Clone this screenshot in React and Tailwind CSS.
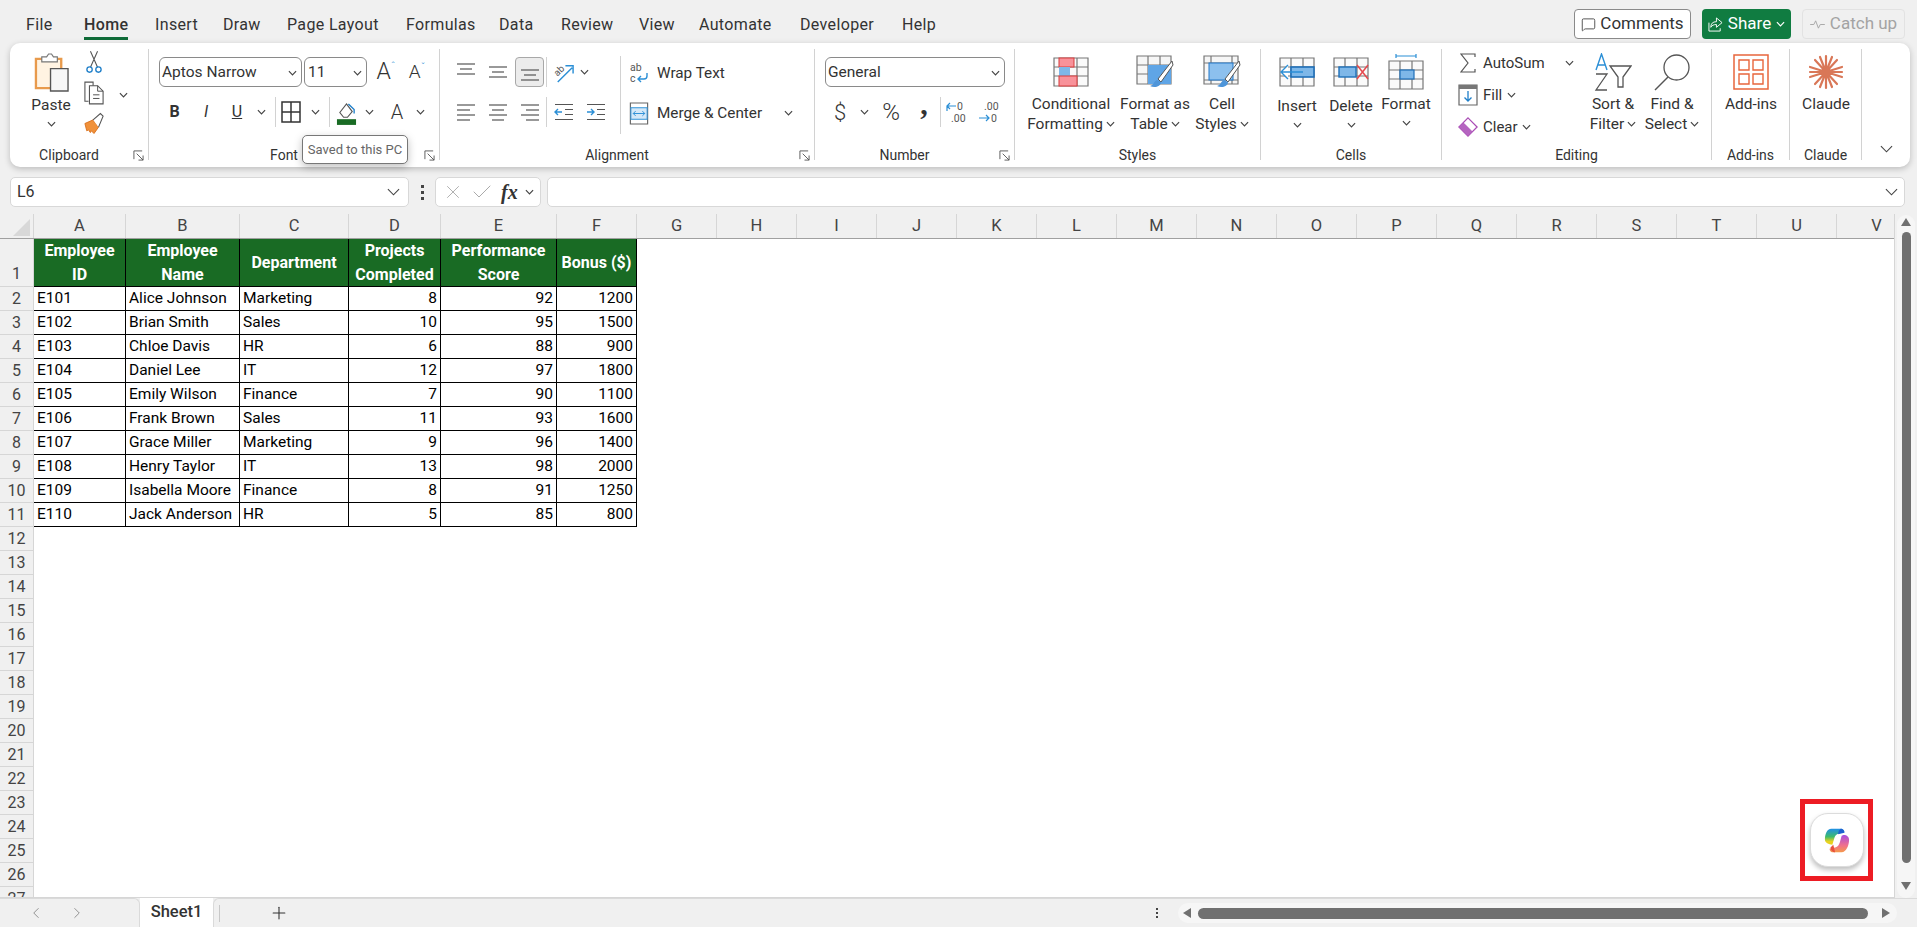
import { X, Check, MessageSquare, Plus, ChevronLeft, ChevronRight } from "lucide-react"

const tabs = [
  ["File", "w-[58px]"],
  ["Home", "w-[71px]"],
  ["Insert", "w-[68px]"],
  ["Draw", "w-[64px]"],
  ["Page Layout", "w-[119px]"],
  ["Formulas", "w-[93px]"],
  ["Data", "w-[62px]"],
  ["Review", "w-[78px]"],
  ["View", "w-[60px]"],
  ["Automate", "w-[101px]"],
  ["Developer", "w-[102px]"],
  ["Help", "w-[50px]"],
]

const columns = [
  ["A", "w-[92px]"],
  ["B", "w-[114px]"],
  ["C", "w-[109px]"],
  ["D", "w-[92px]"],
  ["E", "w-[116px]"],
  ["F", "w-[80px]"],
  ...["G", "H", "I", "J", "K", "L", "M", "N", "O", "P", "Q", "R", "S", "T", "U", "V"].map((c) => [c, "w-[80px]"]),
]

const headers = [["Employee", "ID"], ["Employee", "Name"], ["Department"], ["Projects", "Completed"], ["Performance", "Score"], ["Bonus ($)"]]

const employees = [
  ["E101", "Alice Johnson", "Marketing", 8, 92, 1200],
  ["E102", "Brian Smith", "Sales", 10, 95, 1500],
  ["E103", "Chloe Davis", "HR", 6, 88, 900],
  ["E104", "Daniel Lee", "IT", 12, 97, 1800],
  ["E105", "Emily Wilson", "Finance", 7, 90, 1100],
  ["E106", "Frank Brown", "Sales", 11, 93, 1600],
  ["E107", "Grace Miller", "Marketing", 9, 96, 1400],
  ["E108", "Henry Taylor", "IT", 13, 98, 2000],
  ["E109", "Isabella Moore", "Finance", 8, 91, 1250],
  ["E110", "Jack Anderson", "HR", 5, 85, 800],
]

const emptyRows = Array.from({ length: 16 }, (_, i) => i + 12)

function Chev({ dark }) {
  return (
    <svg viewBox="0 0 10 6" className="w-[9px] h-[6px] shrink-0">
      <path d="M1 1l4 4 4-4" fill="none" stroke={dark ? "#fff" : "#444"} strokeWidth="1.3" />
    </svg>
  )
}

function Slot({ className = "", children }) {
  return <div className={`flex items-center justify-center shrink-0 h-[30px] ${className}`}>{children}</div>
}

function Sep() {
  return <div className="w-px h-[30px] bg-[#d2d2d2] shrink-0" />
}

function Launcher() {
  return (
    <div className="w-[20px] flex justify-center shrink-0">
      <svg viewBox="0 0 12 12" className="w-[11px] h-[11px]">
        <path d="M1 10V1h9M4 4l7 7M11 6v5H6" fill="none" stroke="#555" strokeWidth="1" />
      </svg>
    </div>
  )
}

function Group({ label, launcher, width, children }) {
  return (
    <div className={`flex flex-col h-[111px] border-r border-[#d2d2d2] shrink-0 ${width}`}>
      <div className="flex flex-1 min-h-0">{children}</div>
      <div className="flex items-center h-[16px] -mb-[3px]">
        <div className="flex-1 text-center text-[14px] leading-[16px] text-[#333]">{label}</div>
        {launcher && <Launcher />}
      </div>
    </div>
  )
}

function BigButton({ icon, lines, chev, width, low, below }) {
  return (
    <div className={`flex flex-col items-center shrink-0 ${width}`}>
      <div className="h-[45px] flex items-center justify-center">{icon}</div>
      <div className={`text-[15.5px] leading-[20px] text-center text-[#333] whitespace-nowrap ${low ? "mt-[2px]" : ""}`}>
        {lines.map((l, i) => (
          <div key={l} className="flex items-center justify-center gap-[3px]">
            {l}
            {chev && i === lines.length - 1 && <Chev />}
          </div>
        ))}
      </div>
      {below && <div className="mt-[6px]"><Chev /></div>}
    </div>
  )
}

function Lines({ bars, y = 0, color = "#555" }) {
  return (
    <svg viewBox="0 0 20 20" className="w-[20px] h-[20px]">
      {bars.map(([x1, x2, yy]) => (
        <path key={yy} d={`M${x1} ${yy + y}H${x2}`} stroke={color} strokeWidth="1.2" />
      ))}
    </svg>
  )
}

function Indent({ flip }) {
  return (
    <svg viewBox="0 0 20 20" className="w-[20px] h-[20px]">
      <path d="M1 2.5h18M1 17.5h18M11 7.5h8M11 12.5h8" stroke="#555" strokeWidth="1.2" />
      <path d={flip ? "M1 10h7M5 7l3 3-3 3" : "M8 10H1M4 7l-3 3 3 3"} fill="none" stroke="#2b8fd6" strokeWidth="1.4" />
    </svg>
  )
}

function SheetGrid({ children, className = "" }) {
  return (
    <svg viewBox="0 0 36 30" className={`w-[36px] h-[30px] ${className}`}>
      <path d="M1 1h34v28H1zM1 10h34M1 19h34M12 1v28M24 1v28" fill="#fafafa" stroke="#777" strokeWidth="1.2" />
      {children}
    </svg>
  )
}

const CutIcon = (
  <svg viewBox="0 0 18 26" className="w-[16px] h-[24px]">
    <path d="M5 1l8 18M13 1L5 19" stroke="#555" strokeWidth="1.2" />
    <circle cx="4" cy="21.5" r="3" fill="none" stroke="#1f7fc9" strokeWidth="1.5" />
    <circle cx="14" cy="21.5" r="3" fill="none" stroke="#1f7fc9" strokeWidth="1.5" />
  </svg>
)

const CopyIcon = (
  <svg viewBox="0 0 22 26" className="w-[20px] h-[24px]">
    <path d="M5 22H1V1h9v4" fill="none" stroke="#555" strokeWidth="1.2" />
    <path d="M6 5h9l6 6v14H6z" fill="#fff" stroke="#555" strokeWidth="1.2" />
    <path d="M15 5v6h6M10 15h7M10 19h7" fill="none" stroke="#555" strokeWidth="1.1" />
  </svg>
)

const PainterIcon = (
  <svg viewBox="0 0 22 24" className="w-[20px] h-[23px]">
    <path d="M1 12l9-4 6 8-5 7-3-3-1 2-2-3-2 1z" fill="#f0913a" stroke="#d8701c" />
    <path d="M10 8l8-7 3 3-5 12" fill="#fff" stroke="#555" strokeWidth="1.2" />
  </svg>
)

const PasteIcon = (
  <svg viewBox="0 0 36 40" className="w-[35px] h-[39px]">
    <path d="M2 6h26v30H2z" fill="#fff3e2" stroke="#e89a4c" strokeWidth="2.4" />
    <path d="M8 4h5l2-3h3l2 3h4v5H8z" fill="#fff" stroke="#777" strokeWidth="1.2" />
    <path d="M17 16h18v23H17z" fill="#f7f7f7" stroke="#555" strokeWidth="1.4" />
  </svg>
)

const BorderIcon = (
  <svg viewBox="0 0 20 22" className="w-[20px] h-[22px]">
    <path d="M1 1h18v20H1zM10 1v20M1 11h18" fill="none" stroke="#333" strokeWidth="1.5" />
  </svg>
)

const FillIcon = (
  <svg viewBox="0 0 22 26" className="w-[21px] h-[25px]">
    <path d="M4 13l7-9 6 8-5 6H8z" fill="#fff" stroke="#555" strokeWidth="1.2" />
    <path d="M13 4l6 6v4" fill="none" stroke="#1f7fc9" strokeWidth="1.4" />
    <rect x="1" y="20" width="20" height="6" fill="#196b24" />
  </svg>
)

const OrientIcon = (
  <svg viewBox="0 0 24 24" className="w-[23px] h-[23px]">
    <text x="2" y="13" fontSize="10" fill="#555" transform="rotate(-45 8 10)" fontFamily="Roboto, sans-serif">ab</text>
    <path d="M6 22L21 7M14 5h8v8" fill="none" stroke="#2b8fd6" strokeWidth="1.5" />
  </svg>
)

const WrapIcon = (
  <svg viewBox="0 0 18 22" className="w-[18px] h-[22px]">
    <text x="0" y="9" fontSize="10.5" fill="#555" fontFamily="Roboto, sans-serif">ab</text>
    <text x="0" y="20" fontSize="10.5" fill="#555" fontFamily="Roboto, sans-serif">c</text>
    <path d="M17 11v3a3 3 0 0 1-3 3H8M11 14l-3 3 3 3" fill="none" stroke="#2b8fd6" strokeWidth="1.4" />
  </svg>
)

const MergeIcon = (
  <svg viewBox="0 0 20 24" className="w-[20px] h-[23px]">
    <path d="M1 1h18v22H1z" fill="#fff" stroke="#666" strokeWidth="1.2" />
    <rect x="1.5" y="6" width="17" height="12" fill="#d4e8f8" stroke="#2b8fd6" />
    <path d="M4 12h12M6.5 9.5L4 12l2.5 2.5M13.5 9.5L16 12l-2.5 2.5" fill="none" stroke="#2b8fd6" />
  </svg>
)

const DecIcon = ({ inc }) => (
  <svg viewBox="0 0 22 24" className="w-[22px] h-[24px]">
    <text x={inc ? "11" : "6"} y="10" fontSize="10.5" fill="#555" fontFamily="Roboto, sans-serif">{inc ? "0" : ".00"}</text>
    <text x={inc ? "5" : "13"} y="22" fontSize="10.5" fill="#555" fontFamily="Roboto, sans-serif">{inc ? ".00" : "0"}</text>
    {inc ? (
      <path d="M10 6H1M4 3L1 6l3 3M1 6v5" fill="none" stroke="#2b8fd6" strokeWidth="1.2" />
    ) : (
      <path d="M1 18h10M8 15l3 3-3 3" fill="none" stroke="#2b8fd6" strokeWidth="1.2" />
    )}
  </svg>
)

const CondIcon = (
  <SheetGrid>
    <rect x="6" y="1" width="15" height="9" fill="#f8929a" stroke="#d83b3b" />
    <rect x="6" y="10" width="11" height="9" fill="#7eb7e8" />
    <rect x="6" y="19" width="18" height="10" fill="#f8929a" stroke="#d83b3b" />
  </SheetGrid>
)

const BrushPath = (
  <>
    <path d="M36 6L22 24l3 3L37 10z" fill="#fff" stroke="#555" />
    <path d="M21 25c-3 1-3 5-7 6 4 2 11 1 11-4z" fill="#4e95d9" />
  </>
)

const TableIcon = (
  <svg viewBox="0 0 38 33" className="w-[38px] h-[33px]">
    <path d="M1 1h34v28H1zM1 10h34M1 19h34M12 1v28M24 1v28" fill="#f6f6f6" stroke="#777" strokeWidth="1.2" />
    <rect x="12" y="10" width="23" height="19" fill="#5fa5e6" />
    {BrushPath}
  </svg>
)

const StylesIcon = (
  <svg viewBox="0 0 38 33" className="w-[38px] h-[33px]">
    <path d="M1 1h34v28H1zM1 8h34M8 1v28M29 1v28M1 25h34" fill="#f6f6f6" stroke="#777" strokeWidth="1.2" />
    <rect x="6" y="8" width="24" height="17" fill="#8cc0ee" stroke="#2278c9" />
    {BrushPath}
  </svg>
)

const InsertIcon = (
  <SheetGrid>
    <rect x="12" y="10" width="23" height="10" fill="#7eb7e8" stroke="#1f6fb8" strokeWidth="1.6" />
    <path d="M24 15H3M9 8l-7 7 7 7" fill="#fff" stroke="#2b8fd6" strokeWidth="1.4" />
  </SheetGrid>
)

const DeleteIcon = (
  <SheetGrid>
    <rect x="6" y="10" width="17" height="10" fill="#7eb7e8" stroke="#1f6fb8" strokeWidth="1.4" />
    <path d="M24 8l11 14M35 8L24 22" stroke="#e5484d" strokeWidth="1.5" />
  </SheetGrid>
)

const FormatIcon = (
  <svg viewBox="0 0 36 36" className="w-[36px] h-[36px]">
    <path d="M8 2h20M8 0v4M28 0v4" stroke="#2b8fd6" strokeWidth="1.2" />
    <path d="M1 7h34v28H1zM1 16h34M1 25h34M12 7v28M24 7v28" fill="#fafafa" stroke="#777" strokeWidth="1.2" />
    <rect x="12" y="16" width="14" height="9" fill="#7eb7e8" stroke="#1f6fb8" strokeWidth="1.2" />
  </svg>
)

const SigmaIcon = (
  <svg viewBox="0 0 16 20" className="w-[16px] h-[20px]">
    <path d="M15 4V1H1l7 9-7 9h14v-3" fill="none" stroke="#555" strokeWidth="1.2" />
  </svg>
)

const FillDown = (
  <svg viewBox="0 0 20 22" className="w-[20px] h-[22px]">
    <path d="M1 1h18v20H1z" fill="#fff" stroke="#666" strokeWidth="1.2" />
    <rect x="1" y="1" width="18" height="4" fill="#777" />
    <path d="M10 7v10M6.5 13.5L10 17l3.5-3.5" fill="none" stroke="#1f7fc9" strokeWidth="1.3" />
  </svg>
)

const ClearIcon = (
  <svg viewBox="0 0 22 22" className="w-[20px] h-[20px]">
    <path d="M11 1l10 10-10 10L1 11z" fill="#fff" stroke="#a94bb5" strokeWidth="1.4" />
    <path d="M1 11l5-5 10 10-5 5z" fill="#b565c0" />
  </svg>
)

const SortIcon = (
  <svg viewBox="0 0 38 38" className="w-[38px] h-[38px]">
    <path d="M2 17L7.5 1 13 17M4 12h7" fill="none" stroke="#2b8fd6" strokeWidth="1.4" />
    <path d="M2 21h11L2 37h11" fill="none" stroke="#555" strokeWidth="1.3" />
    <path d="M16 13h21l-8 11v10h-5V24z" fill="#fff" stroke="#555" strokeWidth="1.3" />
  </svg>
)

const FindIcon = (
  <svg viewBox="0 0 38 38" className="w-[38px] h-[38px]">
    <circle cx="23.5" cy="14.5" r="12.5" fill="#fff" stroke="#555" strokeWidth="1.3" />
    <path d="M15 24L2 37" stroke="#555" strokeWidth="1.4" />
  </svg>
)

const AddinsIcon = (
  <svg viewBox="0 0 36 36" className="w-[36px] h-[36px]">
    <path d="M1 1h34v34H1z" fill="none" stroke="#e8663c" strokeWidth="1.5" />
    <path d="M6 6h10v10H6zM20 6h10v10H20zM6 20h10v10H6zM20 20h10v10H20z" fill="none" stroke="#e8663c" strokeWidth="1.4" />
  </svg>
)

const ClaudeIcon = (
  <svg viewBox="0 0 36 36" className="w-[36px] h-[36px]">
    <path
      d="M18 2v32M7 6l22 24M29 6L7 30M2 13l32 10M34 13L2 23M12 3l12 30M24 3L12 33M2 18h32"
      stroke="#d97757"
      strokeWidth="2.2"
      strokeLinecap="round"
    />
    <circle cx="18" cy="18" r="5" fill="#d97757" />
  </svg>
)

const CopilotIcon = (
  <svg viewBox="0 0 28 36" preserveAspectRatio="none" className="w-[26px] h-[25px]">
    <defs>
      <linearGradient id="cpLeft" x1="0" y1="0" x2="0" y2="1">
        <stop offset="0" stopColor="#1f8fe8" />
        <stop offset="0.5" stopColor="#3dbb6c" />
        <stop offset="0.8" stopColor="#e8d21f" />
      </linearGradient>
      <linearGradient id="cpRight" x1="0" y1="0" x2="0" y2="1">
        <stop offset="0" stopColor="#a64de0" />
        <stop offset="0.6" stopColor="#f0708c" />
        <stop offset="1" stopColor="#f59a4a" />
      </linearGradient>
    </defs>
    <path d="M8 1h10c3 0 4 3 4 5L16 8c-3 1-4 3-5 7l-2 9c-4 0-8-3-8-7C1 9 3 1 8 1z" fill="url(#cpLeft)" />
    <path d="M18 1c3 0 4 4 4 6l-7 2 1-5z" fill="#1c5fd0" />
    <path d="M21 10c4 0 6 3 6 7 0 8-3 18-8 18H9c-2 0-3-3-3-5l6-2c3-1 4-3 5-7l2-10z" fill="url(#cpRight)" />
    <path d="M10 24l2 11c-3 0-5-4-5-7z" fill="#e8503c" />
  </svg>
)

function App() {
  return (
    <div className="w-[1917px] h-[927px] overflow-hidden flex flex-col bg-[#f0f0f0] text-[#333] font-['Roboto',sans-serif]">
      {/* tabs */}
      <div className="flex h-[43px] shrink-0">
        <div className="flex flex-1 pl-[26px] pt-[13px] text-[16px] tracking-[0.35px]">
          {tabs.map(([name, w]) => (
            <div key={name} className={`h-[27px] ${w}`}>
              <span className={`inline-block h-[27px] leading-[24px] ${name === "Home" ? "font-medium border-b-[3px] border-[#0f6b38]" : ""}`}>
                {name}
              </span>
            </div>
          ))}
        </div>
        <div className="flex gap-[11px] pt-[9px] pr-[12px] text-[17px]">
          <div className="w-[117px] h-[30px] flex items-center justify-center gap-[4px] bg-white border border-[#8a8a8a] rounded-[4px]">
            <MessageSquare size={15} strokeWidth={1.3} />
            Comments
          </div>
          <div className="w-[89px] h-[30px] flex items-center justify-center gap-[5px] bg-[#107c41] text-white rounded-[4px]">
            <svg viewBox="0 0 16 16" className="w-[15px] h-[15px]">
              <path d="M9 1l6 5-6 5V8C6 8 4 9 3 11c0-4 2-6 6-6zM1 6v9h12v-3" fill="none" stroke="#fff" strokeWidth="1" />
            </svg>
            Share
            <Chev dark />
          </div>
          <div className="w-[103px] h-[30px] flex items-center justify-center gap-[5px] text-[#a3a3a3] border border-[#e2e2e2] rounded-[4px]">
            <svg viewBox="0 0 16 12" className="w-[15px] h-[11px]">
              <path d="M0 6h4l2-4 3 8 2-4h5" fill="none" stroke="#a3a3a3" strokeWidth="1" />
            </svg>
            Catch up
          </div>
        </div>
      </div>

      {/* ribbon */}
      <div className="relative ml-[10px] w-[1900px] h-[124px] shrink-0 flex pt-[6px] bg-white rounded-[10px] shadow-[0_2px_6px_rgba(0,0,0,0.22)]">
        <Group label="Clipboard" launcher width="w-[139px]">
          <div className="w-[76px] flex flex-col items-center pl-[6px]">
            <div className="mt-[4px]">{PasteIcon}</div>
            <div className="text-[15.5px] leading-[20px] mt-[3px]">Paste</div>
            <div className="mt-[6px]"><Chev /></div>
          </div>
          <div className="flex flex-col items-center w-[24px] -ml-[4px] pt-[1px] gap-[7px]">
            {CutIcon}
            {CopyIcon}
            {PainterIcon}
          </div>
          <div className="ml-[13px] mt-[43px]"><Chev /></div>
        </Group>

        <Group label="Font" launcher width="w-[291px]">
          <div className="flex flex-col pl-[10px] pt-[8px]">
            <div className="flex items-center">
              <div className="w-[143px] h-[30px] flex items-center justify-between pt-[1px] pl-[2px] pr-[4px] border border-[#8a8a8a] rounded-[6px] text-[15.5px]">
                Aptos Narrow <Chev />
              </div>
              <div className="ml-[2px] w-[63px] h-[30px] flex items-center justify-between pt-[1px] pl-[3px] pr-[4px] border border-[#8a8a8a] rounded-[6px] text-[15.5px]">
                11 <Chev />
              </div>
              <Slot className="w-[32px] text-[23px] font-light">
                A<span className="text-[#2b8fd6] text-[11px] mb-[10px] -mr-[6px]">ˆ</span>
              </Slot>
              <Slot className="w-[36px] text-[19px] font-light">
                A<span className="text-[#2b8fd6] text-[11px] mb-[8px]">ˇ</span>
              </Slot>
            </div>
            <div className="flex items-center mt-[10px]">
              <Slot className="w-[31px] font-bold text-[16px]">B</Slot>
              <Slot className="w-[32px] italic text-[16px]">I</Slot>
              <Slot className="w-[30px] underline text-[16px]">U</Slot>
              <Slot className="w-[18px]"><Chev /></Slot>
              <div className="ml-[5px]"><Sep /></div>
              <Slot className="w-[30px]">{BorderIcon}</Slot>
              <Slot className="w-[18px]"><Chev /></Slot>
              <div className="ml-[5px]"><Sep /></div>
              <Slot className="w-[33px]">{FillIcon}</Slot>
              <Slot className="w-[13px]"><Chev /></Slot>
              <Slot className="w-[42px] text-[20px] font-light">A</Slot>
              <Slot className="w-[4px]"><Chev /></Slot>
            </div>
          </div>
        </Group>

        <Group label="Alignment" launcher width="w-[375px]">
          <div className="flex pl-[10px] pt-[8px]">
            <div className="w-[170px] flex flex-col gap-[10px]">
              <div className="flex items-center">
                <Slot className="w-[32px]"><Lines bars={[[1, 19, 2], [4, 16, 7], [1, 19, 12]]} /></Slot>
                <Slot className="w-[32px]"><Lines bars={[[1, 19, 5], [4, 16, 10], [1, 19, 15]]} /></Slot>
                <Slot className="ml-[1px] w-[29px] bg-[#ececec] border border-[#a8a8a8] rounded-[4px]">
                  <Lines bars={[[1, 19, 8], [4, 16, 13], [1, 19, 18]]} />
                </Slot>
                <div className="ml-[2px]"><Sep /></div>
                <Slot className="w-[33px]">{OrientIcon}</Slot>
                <Slot className="w-[8px]"><Chev /></Slot>
              </div>
              <div className="flex items-center">
                <Slot className="w-[32px]"><Lines bars={[[1, 19, 3], [1, 14, 8], [1, 19, 13], [1, 14, 18]]} /></Slot>
                <Slot className="w-[32px]"><Lines bars={[[1, 19, 3], [4, 16, 8], [1, 19, 13], [4, 16, 18]]} /></Slot>
                <Slot className="ml-[1px] w-[29px]"><Lines bars={[[1, 19, 3], [6, 19, 8], [1, 19, 13], [6, 19, 18]]} /></Slot>
                <div className="ml-[2px]"><Sep /></div>
                <Slot className="w-[33px]"><Indent /></Slot>
                <Slot className="w-[32px]"><Indent flip /></Slot>
              </div>
            </div>
            <div className="w-px h-[78px] -mt-px bg-[#d2d2d2]" />
            <div className="flex flex-col gap-[10px] text-[15.3px]">
              <div className="flex items-center h-[30px] pt-[2px]">
                <Slot className="w-[36px]">{WrapIcon}</Slot>
                Wrap Text
              </div>
              <div className="flex items-center h-[30px] pt-[2px]">
                <Slot className="w-[36px]">{MergeIcon}</Slot>
                Merge &amp; Center
                <span className="ml-[22px]"><Chev /></span>
              </div>
            </div>
          </div>
        </Group>

        <Group label="Number" launcher width="w-[200px]">
          <div className="flex flex-col pl-[10px] pt-[8px]">
            <div className="w-[180px] h-[30px] flex items-center justify-between pt-[1px] pl-[2px] pr-[4px] border border-[#8a8a8a] rounded-[6px] text-[15.5px]">
              General <Chev />
            </div>
            <div className="flex items-center mt-[10px]">
              <Slot className="w-[30px] text-[22px] font-light">$</Slot>
              <Slot className="w-[18px]"><Chev /></Slot>
              <Slot className="ml-[2px] w-[32px] text-[24px] font-light">%</Slot>
              <Slot className="ml-[1px] w-[32px] text-[30px] font-bold pb-[18px] font-['Liberation_Serif',serif]">,</Slot>
              <Sep />
              <Slot className="w-[32px]"><DecIcon inc /></Slot>
              <Slot className="w-[32px]"><DecIcon /></Slot>
            </div>
          </div>
        </Group>

        <Group label="Styles" width="w-[246px]">
          <div className="flex pl-[12px]">
            <BigButton icon={CondIcon} lines={["Conditional", "Formatting"]} chev width="w-[88px]" />
            <BigButton icon={TableIcon} lines={["Format as", "Table"]} chev width="w-[80px]" />
            <BigButton icon={StylesIcon} lines={["Cell", "Styles"]} chev width="w-[54px]" />
          </div>
        </Group>

        <Group label="Cells" width="w-[181px]">
          <div className="flex pl-[9px]">
            <BigButton icon={InsertIcon} lines={["Insert"]} low below width="w-[54px]" />
            <BigButton icon={DeleteIcon} lines={["Delete"]} low below width="w-[54px]" />
            <BigButton icon={FormatIcon} lines={["Format"]} below width="w-[56px]" />
          </div>
        </Group>

        <Group label="Editing" width="w-[270px]">
          <div className="w-[144px] flex flex-col gap-[4px] pl-[13px] text-[15px]">
            <div className="flex items-center h-[28px]">
              <div className="w-[25px] flex justify-center">{SigmaIcon}</div>
              <span className="ml-[3px]">AutoSum</span>
              <span className="ml-[20px]"><Chev /></span>
            </div>
            <div className="flex items-center h-[28px]">
              <div className="w-[25px] flex justify-center">{FillDown}</div>
              <span className="ml-[3px]">Fill</span>
              <span className="ml-[5px]"><Chev /></span>
            </div>
            <div className="flex items-center h-[28px]">
              <div className="w-[25px] flex justify-center">{ClearIcon}</div>
              <span className="ml-[3px]">Clear</span>
              <span className="ml-[4px]"><Chev /></span>
            </div>
          </div>
          <BigButton icon={SortIcon} lines={["Sort &", "Filter"]} chev width="w-[54px]" />
          <BigButton icon={FindIcon} lines={["Find &", "Select"]} chev width="w-[64px]" />
        </Group>

        <Group label="Add-ins" width="w-[78px]">
          <BigButton icon={AddinsIcon} lines={["Add-ins"]} width="w-[78px]" />
        </Group>

        <Group label="Claude" width="w-[72px]">
          <BigButton icon={ClaudeIcon} lines={["Claude"]} width="w-[72px]" />
        </Group>

        <div className="flex-1 flex items-end justify-center h-[111px] pb-[7px]">
          <svg viewBox="0 0 14 8" className="w-[13px] h-[8px]">
            <path d="M1 1l6 6 6-6" fill="none" stroke="#444" strokeWidth="1.2" />
          </svg>
        </div>

        <div className="absolute left-[292px] top-[92px] w-[106px] h-[29px] flex items-center justify-center bg-white border border-[#777] rounded-[5px] text-[13px] text-[#666] shadow-[0_3px_8px_rgba(0,0,0,0.25)]">
          Saved to this PC
        </div>
      </div>

      {/* formula bar */}
      <div className="flex items-center h-[30px] mt-[10px] pl-[10px] shrink-0">
        <div className="w-[399px] h-[30px] flex items-center justify-between pl-[6px] pr-[8px] bg-white border border-[#d8d8d8] rounded-[5px] text-[16px]">
          L6
          <svg viewBox="0 0 14 8" className="w-[13px] h-[8px]">
            <path d="M1 1l6 6 6-6" fill="none" stroke="#444" strokeWidth="1.2" />
          </svg>
        </div>
        <div className="w-[26px] flex flex-col items-center gap-[3px]">
          <div className="w-[3px] h-[3px] bg-[#444]" />
          <div className="w-[3px] h-[3px] bg-[#444]" />
          <div className="w-[3px] h-[3px] bg-[#444]" />
        </div>
        <div className="w-[106px] h-[30px] flex items-center pl-[6px] bg-white border border-[#d8d8d8] rounded-[5px]">
          <X size={22} strokeWidth={1} className="text-[#aaa]" />
          <Check size={24} strokeWidth={1} className="ml-[6px] text-[#aaa]" />
          <span className="ml-[7px] text-[20px] italic font-bold font-['Liberation_Serif',serif] text-[#333]">fx</span>
          <span className="ml-[7px]"><Chev /></span>
        </div>
        <div className="ml-[6px] w-[1358px] h-[30px] flex items-center justify-end pr-[6px] bg-white border border-[#d8d8d8] rounded-[5px]">
          <svg viewBox="0 0 14 8" className="w-[13px] h-[8px]">
            <path d="M1 1l6 6 6-6" fill="none" stroke="#444" strokeWidth="1.2" />
          </svg>
        </div>
      </div>

      {/* sheet */}
      <div className="flex flex-1 min-h-0 mt-[7px]">
        <div className="relative w-[1895px] shrink-0 flex flex-col overflow-hidden border-r border-b border-[#d6d6d6] bg-white">
          <div className="flex h-[25px] shrink-0 bg-[#f0f0f0] border-b border-[#a0a0a0]">
            <div className="w-[34px] shrink-0 flex items-end justify-end pr-[3px] pb-[2px] border-r border-[#d6d6d6]">
              <div className="w-0 h-0 border-l-[17px] border-l-transparent border-b-[17px] border-b-[#d8d8d8]" />
            </div>
            {columns.map(([c, w]) => (
              <div key={c} className={`${w} shrink-0 flex items-center justify-center border-r border-[#d6d6d6] text-[16.5px] text-[#444]`}>
                {c}
              </div>
            ))}
          </div>

          <div className="flex flex-col">
            <div className="flex h-[48px] shrink-0">
              <div className="w-[34px] shrink-0 flex items-end justify-center bg-[#f0f0f0] border-r border-b border-[#d6d6d6] text-[16px] text-[#444] leading-[24px]">1</div>
              {headers.map((h, i) => (
                <div
                  key={h.join()}
                  className={`${columns[i][1]} shrink-0 flex flex-col items-center justify-center bg-[#196b24] border-r border-b border-black text-white text-[16px] font-bold leading-[24px] whitespace-nowrap`}
                >
                  {h.map((l) => <div key={l}>{l}</div>)}
                </div>
              ))}
            </div>
            {employees.map((row, r) => (
              <div key={row[0]} className="flex h-[24px] shrink-0">
                <div className="w-[34px] shrink-0 flex items-center justify-center bg-[#f0f0f0] border-r border-b border-[#d6d6d6] text-[16px] text-[#444]">{r + 2}</div>
                {row.map((v, i) => (
                  <div
                    key={i}
                    className={`${columns[i][1]} shrink-0 flex items-center px-[3px] border-r border-b border-black text-[15.5px] text-black whitespace-nowrap ${i > 2 ? "justify-end" : ""}`}
                  >
                    {v}
                  </div>
                ))}
              </div>
            ))}
            {emptyRows.map((n) => (
              <div key={n} className="flex h-[24px] shrink-0">
                <div className="w-[34px] shrink-0 flex items-center justify-center bg-[#f0f0f0] border-r border-b border-[#d6d6d6] text-[16px] text-[#444]">{n}</div>
              </div>
            ))}
          </div>

          <div className="absolute right-[21px] bottom-[16px] w-[73px] h-[82px] flex items-center justify-center border-[5px] border-[#ed1c24]">
            <div className="w-[54px] h-[54px] flex items-center justify-center bg-white border border-[#dcdcdc] rounded-[18px] shadow-[0_3px_5px_rgba(0,0,0,0.25)]">
              {CopilotIcon}
            </div>
          </div>
        </div>

        <div className="flex-1 flex justify-center pt-[1px]">
          <div className="w-[18px] flex flex-col items-center bg-[#f6f6f6] rounded-full pt-[3px] pb-[3px]">
            <div className="w-0 h-0 border-x-[5px] border-x-transparent border-b-[8px] border-b-[#707070]" />
            <div className="w-[9px] h-[631px] mt-[6px] bg-[#707070] rounded-full" />
            <div className="mt-[19px] w-0 h-0 border-x-[5px] border-x-transparent border-t-[8px] border-t-[#707070]" />
          </div>
        </div>
      </div>

      {/* sheet tabs */}
      <div className="flex h-[29px] shrink-0">
        <div className="w-[140px] flex items-center border-t border-r border-[#dadada] rounded-tr-[6px] text-[#888]">
          <ChevronLeft size={18} strokeWidth={1.2} className="ml-[27px]" />
          <ChevronRight size={18} strokeWidth={1.2} className="ml-[23px]" />
        </div>
        <div className="w-[73px] flex items-center justify-center bg-white text-[16.5px] font-medium">Sheet1</div>
        <div className="flex-1 flex items-center border-t border-l border-[#dadada] rounded-tl-[6px]">
          <div className="ml-[5px] w-px h-[17px] bg-[#c8c8c8]" />
          <Plus size={20} strokeWidth={1.3} className="ml-[49px]" />
          <div className="ml-[867px] flex flex-col gap-[2px]">
            <div className="w-[2px] h-[2px] bg-[#444]" />
            <div className="w-[2px] h-[2px] bg-[#444]" />
            <div className="w-[2px] h-[2px] bg-[#444]" />
          </div>
          <div className="ml-[20px] w-[719px] h-[20px] flex items-center bg-[#f6f6f6] rounded-full pl-[5px]">
            <div className="w-0 h-0 border-y-[5px] border-y-transparent border-r-[8px] border-r-[#707070]" />
            <div className="ml-[7px] w-[670px] h-[11px] bg-[#707070] rounded-full" />
            <div className="ml-[14px] w-0 h-0 border-y-[5px] border-y-transparent border-l-[8px] border-l-[#707070]" />
          </div>
        </div>
      </div>
    </div>
  )
}

export default App
